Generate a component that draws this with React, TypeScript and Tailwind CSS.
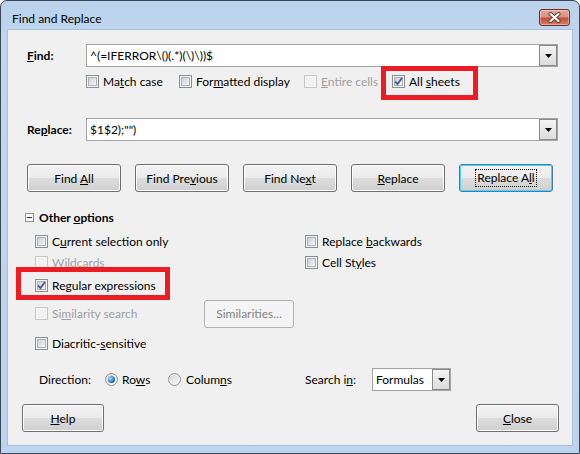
import React from 'react';

type Kids = { children?: React.ReactNode };

// Win7 style checkbox (13x13)
const CheckBox = ({ checked = false, disabled = false }: { checked?: boolean; disabled?: boolean }) => (
  <span
    className={`relative flex h-[13px] w-[13px] shrink-0 items-center justify-center border p-px ${
      disabled ? 'border-[#c6c6c6] bg-[#f7f7f7]' : 'border-[#8e8f8f] bg-[#f4f4f4]'
    }`}
  >
    <span
      className={`block h-[9px] w-[9px] ${
        disabled
          ? 'bg-[#f1f1f1]'
          : 'border border-[#aeb3b9] bg-[linear-gradient(135deg,#cbcfd5,#f6f6f6)]'
      }`}
    />
    {checked && (
      <svg className="absolute left-0 top-0" width="11" height="11" viewBox="0 0 11 11">
        <path d="M2 5.5 L4.5 8 L9 2" fill="none" stroke="#4a5f97" strokeWidth="1.9" />
      </svg>
    )}
  </span>
);

const Radio = ({ checked = false }: { checked?: boolean }) => (
  <span className="flex h-[13px] w-[13px] shrink-0 items-center justify-center rounded-full border border-[#8e8f8f] bg-[linear-gradient(135deg,#cfd2d7,#fbfbfb)] shadow-[inset_0_0_0_1px_#f4f4f4]">
    {checked && (
      <span className="block h-[7px] w-[7px] rounded-full bg-[radial-gradient(circle_at_35%_35%,#a9e2ff,#2a7cc4_55%,#0d3f78)]" />
    )}
  </span>
);

const Check = ({
  children,
  checked,
  disabled,
  className = '',
}: Kids & { checked?: boolean; disabled?: boolean; className?: string }) => (
  <div className={`flex items-center gap-[4px] ${className}`}>
    <CheckBox checked={checked} disabled={disabled} />
    <span className={`whitespace-nowrap ${disabled ? 'text-[#a0a0a0]' : ''}`}>{children}</span>
  </div>
);

const Btn = ({
  children,
  className = '',
  def,
  disabled,
}: Kids & { className?: string; def?: boolean; disabled?: boolean }) => {
  let look =
    'border-[#707070] bg-[linear-gradient(to_bottom,#f2f2f2_0%,#ebebeb_50%,#dddddd_50%,#cfcfcf_100%)] shadow-[inset_0_0_0_1px_#fcfcfc]';
  if (def)
    look =
      'border-[#3c7fb1] bg-[linear-gradient(to_bottom,#f2f2f2_0%,#ebebeb_50%,#dddddd_50%,#cfcfcf_100%)] shadow-[inset_0_0_0_1px_#48d4fb]';
  if (disabled) look = 'border-[#adb2b5] bg-[#f4f4f4] text-[#838383]';
  return (
    <div className={`flex h-[28px] shrink-0 items-center justify-center rounded-[3px] border ${look} ${className}`}>
      {def ? (
        <span className="whitespace-nowrap border border-dotted border-black px-px leading-[16px]">{children}</span>
      ) : (
        <span className="whitespace-nowrap">{children}</span>
      )}
    </div>
  );
};

const Combo = ({ value, className = '' }: { value: string; className?: string }) => (
  <div className={`flex h-[23px] shrink-0 border border-[#a3a3a3] bg-white ${className}`}>
    <span className="flex-1 overflow-hidden whitespace-nowrap pl-[3px] leading-[21px]">{value}</span>
    <span className="flex h-full w-[18px] items-center justify-center border border-[#8a8a8a] bg-[linear-gradient(to_bottom,#f4f4f4,#dcdcdc)]">
      <svg width="7" height="4" viewBox="0 0 7 4">
        <path d="M0 0 H7 L3.5 4 Z" fill="#000" />
      </svg>
    </span>
  </div>
);

export default function App() {
  return (
    <div className="h-[454px] w-[580px] bg-white font-['Segoe_UI','Lato',sans-serif] text-[12px] leading-[15px] text-black">
      <div className="flex h-full w-full flex-col rounded-t-[7px] border border-[#3b4757] bg-[linear-gradient(to_bottom,#bad2eb,#bfd6ee_40px,#bcd4ed)]">
        {/* Title bar */}
        <div className="flex h-[28px] shrink-0 items-start justify-between">
          <span className="pl-[11px] pt-[10px]">Find and Replace</span>
          <div className="mr-[9px] mt-[8px] flex h-[17px] w-[31px] items-center justify-center rounded-[3px] border border-[#6e2f26] bg-[linear-gradient(to_bottom,#e9a797_0%,#dc8f7e_45%,#c5503a_55%,#d77b64_100%)] shadow-[inset_0_0_0_1px_rgba(255,255,255,0.35)]">
            <svg width="13" height="11" viewBox="0 0 13 11">
              <path d="M2.5 2 L10.5 9 M10.5 2 L2.5 9" stroke="#5b3a35" strokeWidth="4" strokeLinecap="round" />
              <path d="M2.5 2 L10.5 9 M10.5 2 L2.5 9" stroke="#fff" strokeWidth="2.2" strokeLinecap="round" />
            </svg>
          </div>
        </div>

        {/* Dialog body */}
        <div className="relative mx-[6px] mb-[7px] flex-1 border border-[#a9c0da] bg-[#f0f0f0]">
          {/* Find */}
          <div className="mt-[14px] flex h-[23px] items-center pl-[19px]">
            <span className="w-[59px] font-bold">
              <u>F</u>ind:
            </span>
            <Combo value="^(=IFERROR\()(.*)(\)\))$" className="w-[472px]" />
          </div>

          <div className="mt-[7px] flex h-[15px] items-center pl-[78px]">
            <Check className="w-[93px]">
              Ma<u>t</u>ch case
            </Check>
            <Check className="w-[125px]">
              For<u>m</u>atted display
            </Check>
            <Check className="w-[88px]" disabled>
              <u>E</u>ntire cells
            </Check>
            <Check checked>
              All <u>s</u>heets
            </Check>
          </div>

          {/* Replace */}
          <div className="mt-[29px] flex h-[23px] items-center pl-[19px]">
            <span className="w-[59px] font-bold">
              Re<u>p</u>lace:
            </span>
            <Combo value={'$1$2);"")'} className="w-[472px]" />
          </div>

          {/* Action buttons */}
          <div className="mt-[23px] flex gap-[14px] pl-[19px]">
            <Btn className="w-[94px]">
              Find <u>A</u>ll
            </Btn>
            <Btn className="w-[94px]">
              Find Pre<u>v</u>ious
            </Btn>
            <Btn className="w-[94px]">
              Find Ne<u>x</u>t
            </Btn>
            <Btn className="w-[94px]">
              <u>R</u>eplace
            </Btn>
            <Btn className="w-[94px]" def>
              Replace A<u>l</u>l
            </Btn>
          </div>

          {/* Other options */}
          <div className="mt-[18px] flex h-[15px] items-center gap-[5px] pl-[17px]">
            <span className="flex h-[9px] w-[9px] items-center justify-center border border-[#919191] bg-white">
              <span className="block h-px w-[5px] bg-[#333]" />
            </span>
            <span className="font-bold">
              Other <u>o</u>ptions
            </span>
          </div>

          <div className="mt-[5px] pl-[27px]">
            <div className="flex h-[22px] items-center">
              <Check className="w-[270px]">
                C<u>u</u>rrent selection only
              </Check>
              <Check>
                Replace <u>b</u>ackwards
              </Check>
            </div>
            <div className="flex h-[21px] items-center">
              <Check className="w-[270px]" disabled>
                Wildcards
              </Check>
              <Check>
                Cell St<u>y</u>les
              </Check>
            </div>
            <div className="flex h-[24px] items-center">
              <Check checked>Regular expressions</Check>
            </div>
            <div className="flex h-[33px] items-center">
              <Check className="w-[169px]" disabled>
                Si<u>m</u>ilarity search
              </Check>
              <Btn className="w-[90px]" disabled>
                Similarities...
              </Btn>
            </div>
            <div className="flex h-[26px] items-center">
              <Check>
                Diacritic-<u>s</u>ensitive
              </Check>
            </div>
          </div>

          {/* Direction / search in */}
          <div className="mt-[12px] flex h-[23px] items-center pl-[31px]">
            <span className="w-[66px]">Direction:</span>
            <div className="flex w-[63px] items-center gap-[4px]">
              <Radio checked />
              <span>
                Ro<u>w</u>s
              </span>
            </div>
            <div className="flex w-[137px] items-center gap-[5px]">
              <Radio />
              <span>
                Colum<u>n</u>s
              </span>
            </div>
            <span className="w-[67px]">
              Search i<u>n</u>:
            </span>
            <Combo value="Formulas" className="w-[79px]" />
          </div>

          {/* Bottom buttons */}
          <div className="mt-[13px] flex justify-between pl-[14px] pr-[13px]">
            <Btn className="w-[82px]">
              <u>H</u>elp
            </Btn>
            <Btn className="w-[83px]">
              <u>C</u>lose
            </Btn>
          </div>

          {/* red annotation boxes */}
          <div className="pointer-events-none absolute left-[373px] top-[36px] h-[34px] w-[97px] border-[5px] border-[#ed1c24]" />
          <div className="pointer-events-none absolute left-[8px] top-[237px] h-[33px] w-[154px] border-[5px] border-[#ed1c24]" />
        </div>
      </div>
    </div>
  );
}
